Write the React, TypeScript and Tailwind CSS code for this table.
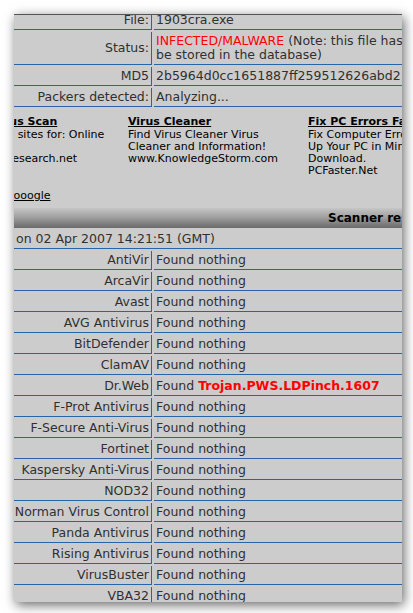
import type { ReactNode } from "react";

const line = "border-[#2764aa]";

const scanners: [string, string | null][] = [
  ["AntiVir", null],
  ["ArcaVir", null],
  ["Avast", null],
  ["AVG Antivirus", null],
  ["BitDefender", null],
  ["ClamAV", null],
  ["Dr.Web", "Trojan.PWS.LDPinch.1607"],
  ["F-Prot Antivirus", null],
  ["F-Secure Anti-Virus", null],
  ["Fortinet", null],
  ["Kaspersky Anti-Virus", null],
  ["NOD32", null],
  ["Norman Virus Control", null],
  ["Panda Antivirus", null],
  ["Rising Antivirus", null],
  ["VirusBuster", null],
  ["VBA32", null],
  ["UNA", null],
];

const ads = [
  {
    title: "Online Virus Scan",
    lines: ["Find the Top sites for: Online", "Virus Scan", "www.VirusResearch.net"],
  },
  {
    title: "Virus Cleaner",
    lines: ["Find Virus Cleaner Virus", "Cleaner and Information!", "www.KnowledgeStorm.com"],
  },
  {
    title: "Fix PC Errors Fast",
    lines: ["Fix Computer Errors & Speed", "Up Your PC in Minutes. Free", "Download.", "PCFaster.Net"],
  },
];

function Row({ label, children }: { label: string; children: ReactNode }) {
  return (
    <div className="flex gap-[2px]">
      <div
        className={`w-[138px] shrink-0 flex items-center justify-end border-b border-r ${line} py-[2px] pr-[2px] leading-[14px] whitespace-nowrap`}
      >
        {label}
      </div>
      <div className={`flex-1 min-w-0 border-b ${line} py-[2px] pl-[2px] leading-[14px] whitespace-nowrap`}>
        {children}
      </div>
    </div>
  );
}

export default function App() {
  return (
    <div className="w-[413px] h-[613px] bg-white pl-[14px] pt-[14px] font-['DejaVu_Sans',Verdana,sans-serif]">
      <div className="w-[388px] h-[588px] overflow-hidden bg-[#cccccc] border-t border-[#555555] shadow-[2px_3px_11px_rgba(0,0,0,0.6)] text-[12.5px] text-[#303030]">
        <div className="-mt-[4px] flex flex-col gap-[2px]">
          <Row label="File:">1903cra.exe</Row>
          <Row label="Status:">
            <span className="text-[#ff0000]">INFECTED/MALWARE</span> (Note: this file has not been scanned before. Its MD5 will now
            <br />
            be stored in the database)
          </Row>
          <Row label="MD5">2b5964d0cc1651887ff259512626abd2</Row>
          <Row label="Packers detected:">Analyzing...</Row>

          <div className="h-[97px] pt-[6px] text-[11px] text-black whitespace-nowrap">
            <div className="flex -ml-[66px]">
              {ads.map((ad) => (
                <div key={ad.title} className="w-[180px] shrink-0">
                  <div className="font-bold underline leading-[14px]">{ad.title}</div>
                  {ad.lines.map((l) => (
                    <div key={l} className="leading-[12px]">
                      {l}
                    </div>
                  ))}
                </div>
              ))}
            </div>
            <div className="mt-[13px] -ml-[63px] leading-[12px] underline">Ads by Gooooogle</div>
          </div>

          <div className="h-[20px] flex items-center pl-[314px] bg-gradient-to-b from-[#c6c6c6] via-[#9c9c9c] to-[#6a6a6a] text-[12px] font-bold text-black whitespace-nowrap">
            Scanner results
          </div>

          <div className={`border-b ${line} py-[2px] pl-[2px] leading-[14px] whitespace-nowrap`}>
            on 02 Apr 2007 14:21:51 (GMT)
          </div>

          {scanners.map(([name, hit]) => (
            <Row key={name} label={name}>
              {hit ? (
                <>
                  Found <span className="font-bold text-[#ff0000]">{hit}</span>
                </>
              ) : (
                "Found nothing"
              )}
            </Row>
          ))}
        </div>
      </div>
    </div>
  );
}
